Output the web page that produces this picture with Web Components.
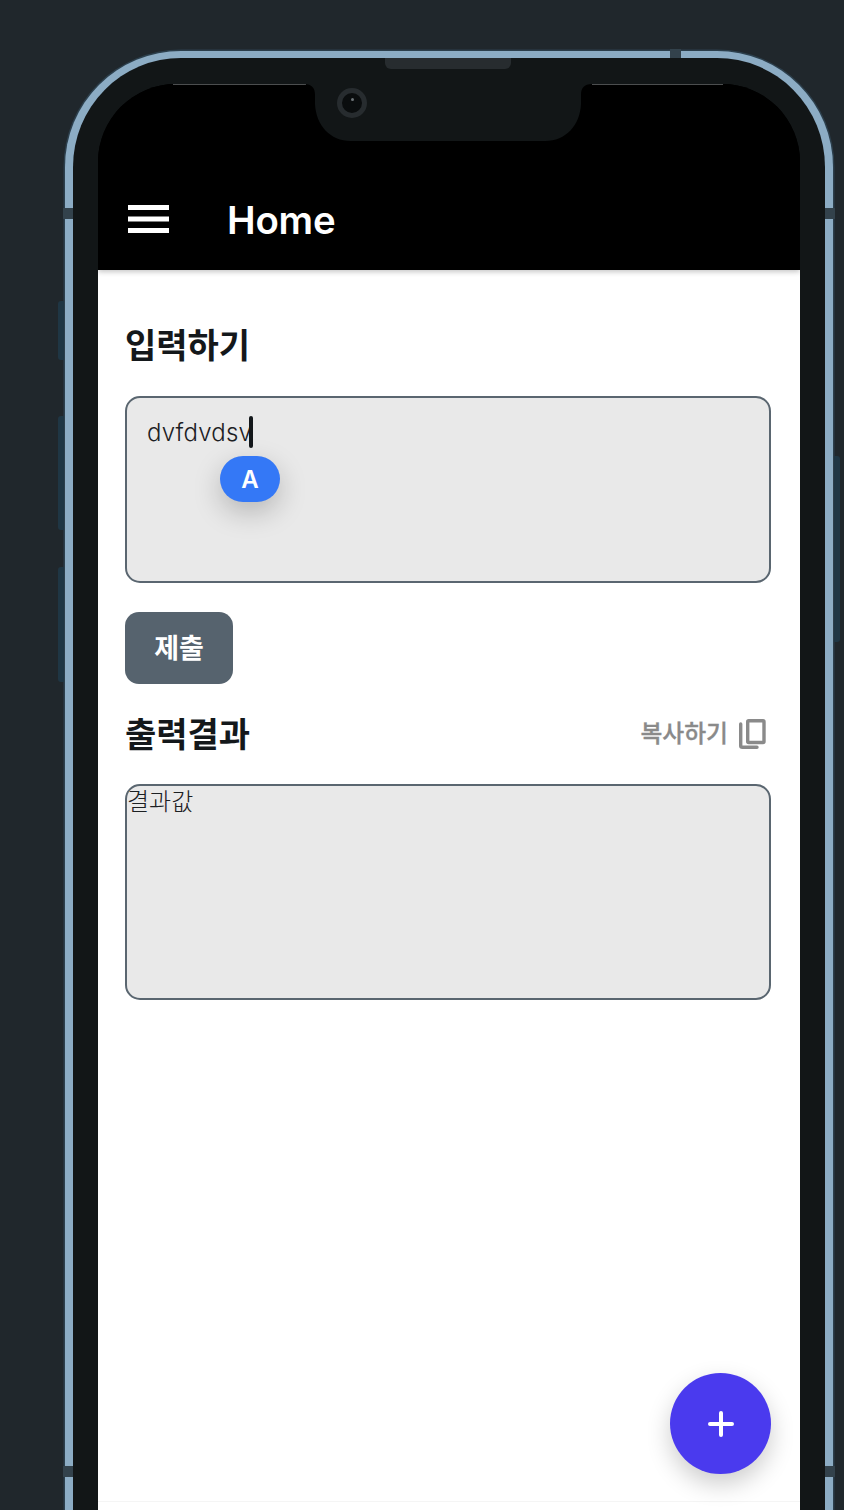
<!DOCTYPE html>
<html lang="ko">
<head>
<meta charset="utf-8">
<title>Home</title>
<style>
  html, body { margin: 0; height: 1510px; overflow: hidden; background: #20272c; }
  body { font-family: Inter, "Noto Sans CJK KR", sans-serif; color: #14181b; }
</style>
</head>
<body>
<phone-frame>
  <app-bar title="Home"></app-bar>
  <home-view></home-view>
  <bottom-strip></bottom-strip>
</phone-frame>

<script>
// Marco del telefono: borde azul, bisel, notch y botones laterales
class PhoneFrame extends HTMLElement {
  constructor() {
    super();
    this.attachShadow({ mode: 'open' });
    this.shadowRoot.innerHTML = `
      <style>
        :host { display: block; position: relative; width: 768px; height: 1459px; margin: 0 0 0 65px; top: 51px; }
        .shell {
          box-sizing: border-box; height: 100%;
          border: solid #8cacc4; border-width: 7.5px 8px 0;
          border-radius: 116px 116px 0 0;
          box-shadow: 0 0 0 1.5px #2c3f4c;
          background: #121617; padding: 25.5px 25px 0;
        }
        .screen {
          position: relative; height: 100%; overflow: hidden;
          border-radius: 78px 78px 0 0; background: #000;
          display: flex; flex-direction: column;
        }
        .edge { position: absolute; z-index: 2; background: #4c4e4f; height: 1px; top: 33px; }
        .tick { position: absolute; z-index: 2; background: #33424c; }
        .side { position: absolute; background: #1f3644; width: 6px; left: -7px; border-radius: 3px 0 0 3px; }
        .side.right { left: auto; right: -7px; border-radius: 0 3px 3px 0; }
        .notch { position: absolute; z-index: 2; left: 239px; top: 33px; display: block; }
        .speaker { position: absolute; z-index: 2; left: 320px; top: 7px; width: 126px; height: 11px; background: #272c2f; border-radius: 0 0 6px 6px; }
        .camera { position: absolute; z-index: 3; left: 272px; top: 37px; width: 30px; height: 30px; box-sizing: border-box; border: 5px solid #272c2f; border-radius: 50%; background: #0a0d0e; }
        .camera::after { content: ""; position: absolute; left: 8.5px; top: 4.5px; width: 3px; height: 3px; border-radius: 50%; background: #6d7478; }
      </style>
      <div class="side" style="top:250px;height:59px"></div>
      <div class="side" style="top:365px;height:114px"></div>
      <div class="side" style="top:516px;height:115px"></div>
      <div class="side right" style="top:405px;height:186px"></div>
      <div class="shell"><div class="screen"><slot></slot></div></div>
      <div class="edge" style="left:108px;width:133px"></div>
      <div class="edge" style="left:527px;width:131px"></div>
      <svg class="notch" width="288" height="58" viewBox="0 0 288 58">
        <path fill="#121617" d="M0 0H288C280 0 277 4 277 11V20C276 41 262 57 241 57H47C26 57 12 41 11 20V11C11 4 8 0 0 0Z"/>
      </svg>
      <div class="speaker"></div>
      <div class="camera"></div>
      <div class="tick" style="left:605px;top:-2px;width:11px;height:9px"></div>
      <div class="tick" style="left:-2px;top:157px;width:10px;height:11px"></div>
      <div class="tick" style="right:-2px;top:157px;width:10px;height:11px"></div>
      <div class="tick" style="left:-2px;top:1415px;width:10px;height:11px"></div>
      <div class="tick" style="right:-2px;top:1415px;width:10px;height:11px"></div>
    `;
  }
}

// Barra superior con menu y titulo
class AppBar extends HTMLElement {
  constructor() {
    super();
    this.attachShadow({ mode: 'open' });
  }

  connectedCallback() {
    this.shadowRoot.innerHTML = `
      <style>
        :host {
          display: flex; align-items: center; flex: none;
          box-sizing: border-box; height: 186px; padding: 84px 0 0 30px;
          background: #000; color: #fff;
          box-shadow: 0 2px 5px rgba(0,0,0,.22);
          position: relative; z-index: 1;
        }
        svg { display: block; width: 41px; height: 28px; flex: none; }
        h1 { margin: 3px 0 0 58px; font: 600 38.4px/1 Inter, sans-serif; letter-spacing: -.2px; }
      </style>
      <svg viewBox="0 0 41 28" fill="#fff">
        <rect y="0" width="41" height="5"/><rect y="11.5" width="41" height="5"/><rect y="23" width="41" height="5"/>
      </svg>
      <h1>${this.getAttribute('title')}</h1>
    `;
  }
}

// Caja gris de texto de la vista
class TextPanel extends HTMLElement {
  constructor() {
    super();
    this.attachShadow({ mode: 'open' });
    this.shadowRoot.innerHTML = `
      <style>
        :host {
          display: block; position: relative; box-sizing: border-box;
          border: 2px solid #5a6670; border-radius: 15px; background: #e9e9e9;
          font-size: 24px; font-weight: 300; color: #1c2023;
        }
      </style>
      <slot></slot>
    `;
  }
}

class KeyPopup extends HTMLElement {
  constructor() {
    super();
    this.attachShadow({ mode: 'open' });
    this.shadowRoot.innerHTML = `
      <style>
        :host {
          position: absolute; left: 93px; top: 58px; width: 60px; height: 46px;
          display: flex; align-items: center; justify-content: center;
          border-radius: 23px; background: #3478f6; color: #fff;
          font: 600 24px/1 Inter, sans-serif;
          box-shadow: 0 10px 28px rgba(0,0,0,.22);
        }
        span { position: relative; top: 1px; }
      </style>
      <span><slot></slot></span>
    `;
  }
}

class FabButton extends HTMLElement {
  constructor() {
    super();
    this.attachShadow({ mode: 'open' });
    this.shadowRoot.innerHTML = `
      <style>
        :host {
          position: absolute; right: 29px; bottom: 27px; width: 101px; height: 101px;
          display: flex; align-items: center; justify-content: center;
          border-radius: 50%; background: #4a3aee;
          box-shadow: 0 10px 24px rgba(0,0,0,.2);
        }
        svg { display: block; }
      </style>
      <svg width="26" height="26" viewBox="0 0 26 26" fill="none" stroke="#fff" stroke-width="4" stroke-linecap="round">
        <path d="M13 2V24M2 13H24"/>
      </svg>
    `;
  }
}

// Franja inferior de la pantalla
class BottomStrip extends HTMLElement {
  constructor() {
    super();
    this.attachShadow({ mode: 'open' });
    this.shadowRoot.innerHTML = `
      <style>
        :host { display: block; flex: none; height: 9px; background: #fff; border-top: 1px solid #f5f5f5; box-sizing: border-box; }
      </style>
    `;
  }
}

// Vista principal: entrada, boton de envio y resultado
class HomeView extends HTMLElement {
  constructor() {
    super();
    this.attachShadow({ mode: 'open' });
    this.shadowRoot.innerHTML = `
      <style>
        :host {
          display: flex; flex-direction: column; flex: 1; position: relative;
          box-sizing: border-box; padding: 54px 29px 0 27px; background: #fff;
        }
        h2 { margin: 0; font: 700 34px/44px Inter, "Noto Sans CJK KR", sans-serif; color: #14181b; }
        .input { height: 187px; margin-top: 28px; padding: 19px 20px; line-height: 32px; }
        .caret { position: absolute; left: 122.3px; top: 18px; width: 4px; height: 32px; background: #14181b; border-radius: 2px; }
        .input-text { letter-spacing: .2px; }
        button {
          display: block; align-self: flex-start; width: 108px; height: 72px; margin: 29px 0 0;
          border: 0; border-radius: 14px; background: #56636e; color: #fff;
          font: 700 27px/1 Inter, "Noto Sans CJK KR", sans-serif; padding: 2px 0 0;
        }
        .result-head { display: flex; align-items: center; justify-content: space-between; margin-top: 29px; }
        .copy { display: flex; align-items: center; gap: 11px; padding-right: 5px; margin-bottom: 2px; color: #8a8a8a; font: 500 23.8px/32px Inter, "Noto Sans CJK KR", sans-serif; -webkit-text-stroke: .3px #8a8a8a; }
        .copy svg { display: block; }
        .output { height: 216px; margin-top: 27px; line-height: 32px; }
      </style>
      <h2>입력하기</h2>
      <text-panel class="input">
        <span class="input-text">dvfdvdsv</span>
        <div class="caret"></div>
        <key-popup>A</key-popup>
      </text-panel>
      <button>제출</button>
      <div class="result-head">
        <h2>출력결과</h2>
        <div class="copy">
          <span>복사하기</span>
          <svg width="27" height="30" viewBox="0 0 27 30" fill="none" stroke="#8a8a8a" stroke-width="3.4" stroke-linecap="round" stroke-linejoin="round">
            <rect x="8.7" y="1.7" width="16.3" height="21.8" rx="1"/>
            <path d="M1.7 5V27C1.7 28 2.4 28.3 3.5 28.3H18"/>
          </svg>
        </div>
      </div>
      <text-panel class="output">결과값</text-panel>
      <fab-button></fab-button>
    `;
  }
}

customElements.define('phone-frame', PhoneFrame);
customElements.define('app-bar', AppBar);
customElements.define('text-panel', TextPanel);
customElements.define('key-popup', KeyPopup);
customElements.define('fab-button', FabButton);
customElements.define('bottom-strip', BottomStrip);
customElements.define('home-view', HomeView);
</script>
</body>
</html>
